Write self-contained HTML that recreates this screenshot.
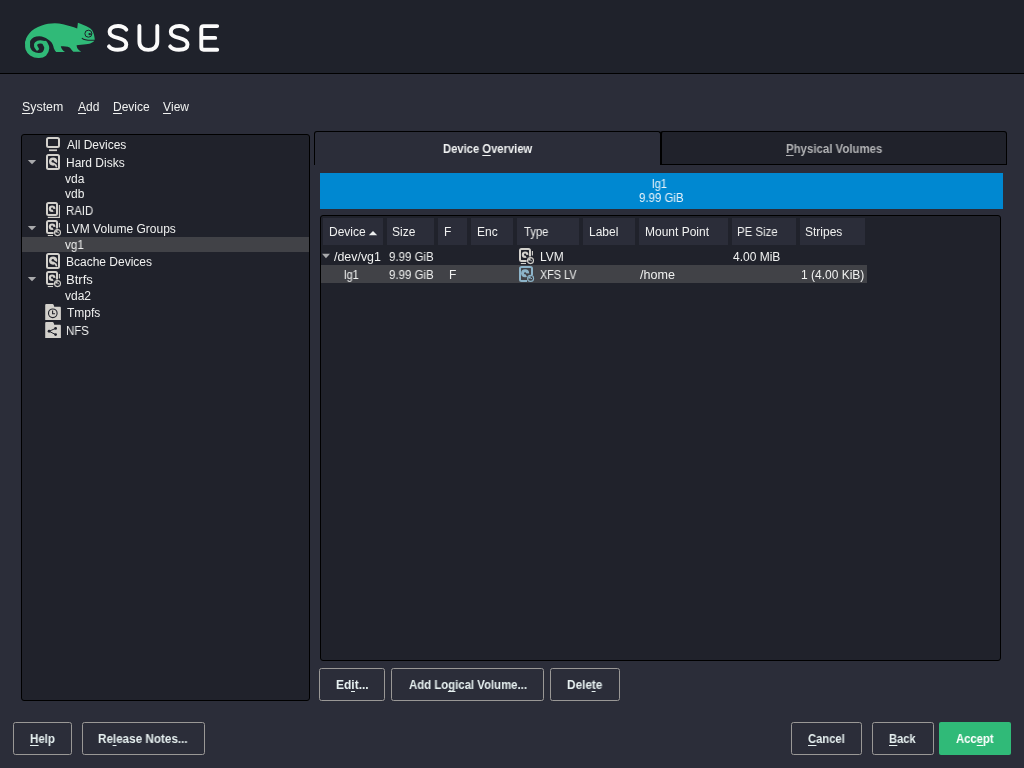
<!DOCTYPE html>
<html><head><meta charset="utf-8"><style>
*{margin:0;padding:0;box-sizing:border-box}
html,body{width:1024px;height:768px;overflow:hidden;background:#2b2d39;font-family:"Liberation Sans",sans-serif;color:#f0f1f0}
.a{position:absolute}
.t{position:absolute;white-space:nowrap;font-size:12px;line-height:20px;will-change:transform;transform-origin:0 0}
.b{font-weight:bold}
u{text-decoration:none;position:relative}
u i{position:absolute;left:0;right:0;top:13px;height:1px;background:currentColor}
</style></head>
<body>
<div class="a" style="left:0px;top:0px;width:1024px;height:73px;background:#1f222b"></div>
<div class="a" style="left:0px;top:73px;width:1024px;height:1px;background:#000"></div>
<svg class="a" style="left:0px;top:0px" width="240" height="73" viewBox="0 0 240 73"><path d="M25.1,44 C25.2,36 31,29 41.8,25.4 C48,23.3 56,22.6 63,24.2 C68,25.3 73,26.8 77.2,28.4 L77.9,22.8 C81,24.2 86,26 89.2,27.7 C92.5,29.6 94.2,33 94.8,39.4 C94.3,41.8 91,43.6 86,44.2 C83,44.6 79,44.5 76.6,45.3 C76.8,48 77.8,50 81.2,51.8 L73.3,51.8 C72,50.5 71,48.5 69.6,47.4 C67.5,46.4 64,46.2 60.8,46.2 C61.2,48.4 62.4,50.4 65,51.9 L56.2,51.9 C54.5,50.5 53.8,48.5 53.4,46.6 C52.6,43.3 50.8,40.9 47.7,39.2 C45.3,37.5 42.6,36.5 39.5,36.3 C35.5,36.2 32,37.6 30.4,40.6 C29.8,42.3 29.8,43.5 30,44 Z" fill="#30ba78"/><path d="M27.60,43.00 C27.65,43.92 27.25,46.78 27.90,48.50 C28.55,50.22 29.73,52.12 31.50,53.30 C33.27,54.48 36.37,55.52 38.50,55.60 C40.63,55.68 42.92,55.07 44.30,53.80 C45.68,52.53 46.68,49.73 46.80,48.00 C46.92,46.27 45.30,44.17 45.00,43.40" fill="none" stroke="#30ba78" stroke-width="5" stroke-linecap="round" stroke-linejoin="round"/><path d="M46.80,48.00 C46.50,47.23 46.10,44.43 45.00,43.40 C43.90,42.37 41.67,41.80 40.20,41.80 C38.73,41.80 36.95,42.68 36.20,43.40 C35.45,44.12 35.52,45.18 35.70,46.10 C35.88,47.02 37.03,48.43 37.30,48.90" fill="none" stroke="#30ba78" stroke-width="3.3" stroke-linecap="round" stroke-linejoin="round"/><circle cx="88.4" cy="33.7" r="3.5" fill="none" stroke="#1f222b" stroke-width="1.0"/><circle cx="89.5" cy="34.1" r="1.1" fill="#1f222b"/><path d="M89.5,34.1 L92,34.1" stroke="#1f222b" stroke-width="1.1"/><path d="M82.2,38.4 C84,40.2 87,40.6 94.8,40.2" fill="none" stroke="#1f222b" stroke-width="1.1" stroke-linecap="round"/><path d="M126.3,29.7 C124.5,27.2 121.5,26 118.1,26 C113,26 109.6,28.3 109.6,31.9 C109.6,35.6 113.5,36.8 117.8,37.8 C122.5,38.9 126.3,40.4 126.3,44.6 C126.3,48.2 122.7,49.8 117.8,49.8 C113.8,49.8 110.8,48.6 109,46.4" fill="none" stroke="#fbfbfb" stroke-width="3.9" stroke-linecap="round" stroke-linejoin="round"/><path d="M126.3,29.7 C124.5,27.2 121.5,26 118.1,26 C113,26 109.6,28.3 109.6,31.9 C109.6,35.6 113.5,36.8 117.8,37.8 C122.5,38.9 126.3,40.4 126.3,44.6 C126.3,48.2 122.7,49.8 117.8,49.8 C113.8,49.8 110.8,48.6 109,46.4" transform="translate(61.2,0)" fill="none" stroke="#fbfbfb" stroke-width="3.9" stroke-linecap="round" stroke-linejoin="round"/><path d="M139.4,26 L139.4,41.8 C139.4,47 142.8,49.9 148.3,49.9 C153.8,49.9 157.3,47 157.3,41.8 L157.3,26" fill="none" stroke="#fbfbfb" stroke-width="3.9" stroke-linecap="round" stroke-linejoin="round"/><path d="M217.2,26.1 L203.6,26.1 C202,26.1 201.3,26.9 201.3,28.5 L201.3,47.3 C201.3,48.9 202,49.7 203.6,49.7 L217.2,49.7 M201.5,37.9 L215.2,37.9" fill="none" stroke="#fbfbfb" stroke-width="3.9" stroke-linecap="round" stroke-linejoin="round"/></svg>
<div class="a" style="left:21px;top:134px;width:289px;height:567px;background:#20222b;border:1px solid #000000;border-radius:3px"></div>
<div class="a" style="left:22px;top:237px;width:287px;height:15px;background:#414247"></div>
<svg class="a" style="left:45px;top:135px" width="17" height="18" viewBox="0 0 17 18"><rect x="2" y="3" width="12" height="9" rx="1.5" fill="none" stroke="#d3d1cc" stroke-width="2"/><rect x="4" y="14.4" width="8" height="1.7" fill="#d3d1cc"/></svg>
<svg class="a" style="left:27px;top:159px" width="10" height="6" viewBox="0 0 10 6"><path d="M0.8,1 L9.2,1 L5,5.2 Z" fill="#a9aaac"/></svg>
<svg class="a" style="left:45px;top:153px" width="17" height="18" viewBox="0 0 17 18"><rect x="2" y="2" width="12" height="14" rx="1.5" fill="none" stroke="#d3d1cc" stroke-width="2"/><circle cx="8.1" cy="8.6" r="4.1" fill="#d3d1cc"/><circle cx="7.8" cy="8.2" r="1.2" fill="#20222b"/><path d="M8,8.4 L12.6,11.4" stroke="#20222b" stroke-width="1.3"/><path d="M10.6,12 L11.4,13.6" stroke="#d3d1cc" stroke-width="1.7" stroke-linecap="round"/></svg>
<svg class="a" style="left:45px;top:201px" width="17" height="18" viewBox="0 0 17 18"><rect x="2" y="2" width="10" height="12" rx="1.5" fill="none" stroke="#d3d1cc" stroke-width="2"/><circle cx="7.1" cy="7.7" r="3.3" fill="#d3d1cc"/><path d="M7.1,7.7 L10.899999999999999,7.9 L9.08,11.6 Z" fill="#20222b"/><circle cx="7.1" cy="7.7" r="1.1" fill="#20222b"/><path d="M14.4,4 L14.4,16.4 L2.8,16.4" fill="none" stroke="#d3d1cc" stroke-width="1.1"/></svg>
<svg class="a" style="left:27px;top:225px" width="10" height="6" viewBox="0 0 10 6"><path d="M0.8,1 L9.2,1 L5,5.2 Z" fill="#a9aaac"/></svg>
<svg class="a" style="left:45px;top:219px" width="17" height="18" viewBox="0 0 17 18"><path d="M12,9.5 L12,3.5 C12,2.6 11.4,2 10.5,2 L3.5,2 C2.6,2 2,2.6 2,3.5 L2,12.5 C2,13.4 2.6,14 3.5,14 L8.6,14" fill="none" stroke="#d3d1cc" stroke-width="2"/><circle cx="7.1" cy="7.7" r="3.3" fill="#d3d1cc"/><path d="M7.1,7.7 L10.899999999999999,7.9 L9.08,11.6 Z" fill="#20222b"/><circle cx="7.1" cy="7.7" r="1.1" fill="#20222b"/><path d="M14.4,3.9 L14.4,8.6" stroke="#d3d1cc" stroke-width="1.1"/><path d="M2.8,16.5 L8,16.5" stroke="#d3d1cc" stroke-width="1.1"/><circle cx="12.5" cy="13.6" r="3.5" fill="#20222b"/><circle cx="12.5" cy="13.6" r="3.0" fill="none" stroke="#d3d1cc" stroke-width="1.1"/><path d="M12.5,13.6 L12.5,11.1 A2.5,2.5 0 0 0 10.0,13.6 Z" fill="#d3d1cc"/><path d="M12.5,13.6 L13.9,13.799999999999999" stroke="#d3d1cc" stroke-width="0.9"/></svg>
<svg class="a" style="left:45px;top:252px" width="17" height="18" viewBox="0 0 17 18"><rect x="2" y="2" width="12" height="14" rx="1.5" fill="none" stroke="#d3d1cc" stroke-width="2"/><circle cx="8.1" cy="8.6" r="4.1" fill="#d3d1cc"/><circle cx="7.8" cy="8.2" r="1.2" fill="#20222b"/><path d="M8,8.4 L12.6,11.4" stroke="#20222b" stroke-width="1.3"/><path d="M10.6,12 L11.4,13.6" stroke="#d3d1cc" stroke-width="1.7" stroke-linecap="round"/></svg>
<svg class="a" style="left:27px;top:276px" width="10" height="6" viewBox="0 0 10 6"><path d="M0.8,1 L9.2,1 L5,5.2 Z" fill="#a9aaac"/></svg>
<svg class="a" style="left:45px;top:270px" width="17" height="18" viewBox="0 0 17 18"><path d="M12,9.5 L12,3.5 C12,2.6 11.4,2 10.5,2 L3.5,2 C2.6,2 2,2.6 2,3.5 L2,12.5 C2,13.4 2.6,14 3.5,14 L8.6,14" fill="none" stroke="#d3d1cc" stroke-width="2"/><circle cx="7.1" cy="7.7" r="3.3" fill="#d3d1cc"/><path d="M7.1,7.7 L10.899999999999999,7.9 L9.08,11.6 Z" fill="#20222b"/><circle cx="7.1" cy="7.7" r="1.1" fill="#20222b"/><path d="M14.4,3.9 L14.4,8.6" stroke="#d3d1cc" stroke-width="1.1"/><path d="M2.8,16.5 L8,16.5" stroke="#d3d1cc" stroke-width="1.1"/><circle cx="12.5" cy="13.6" r="3.5" fill="#20222b"/><circle cx="12.5" cy="13.6" r="3.0" fill="none" stroke="#d3d1cc" stroke-width="1.1"/><path d="M12.5,13.6 L12.5,11.1 A2.5,2.5 0 0 0 10.0,13.6 Z" fill="#d3d1cc"/><path d="M12.5,13.6 L13.9,13.799999999999999" stroke="#d3d1cc" stroke-width="0.9"/></svg>
<svg class="a" style="left:45px;top:303px" width="17" height="18" viewBox="0 0 17 18"><path d="M0.2,2.2 C0.2,1.5 0.7,1 1.4,1 L7.6,1 C8.5,1 8.8,1.8 9.2,3.8 L14.8,3.8 C15.5,3.8 15.9,4.2 15.9,4.9 L15.9,17 L0.2,17 Z" fill="#d3d1cc"/><circle cx="7.8" cy="10.3" r="4.3" fill="none" stroke="#20222b" stroke-width="1.1"/><path d="M7.6,7.6 L7.6,10.7 L10,10.7" fill="none" stroke="#20222b" stroke-width="1.1"/></svg>
<svg class="a" style="left:45px;top:321px" width="17" height="18" viewBox="0 0 17 18"><path d="M0.2,2.2 C0.2,1.5 0.7,1 1.4,1 L7.6,1 C8.5,1 8.8,1.8 9.2,3.8 L14.8,3.8 C15.5,3.8 15.9,4.2 15.9,4.9 L15.9,17 L0.2,17 Z" fill="#d3d1cc"/><path d="M10.6,7.4 L4.1,10.25 L10.6,13.6" fill="none" stroke="#20222b" stroke-width="1"/><circle cx="10.6" cy="7.4" r="1.4" fill="#20222b"/><circle cx="4.1" cy="10.25" r="1.4" fill="#20222b"/><circle cx="10.6" cy="13.6" r="1.4" fill="#20222b"/></svg>
<div class="a" style="left:314px;top:131px;width:347px;height:34px;background:#2b2d39;border:1px solid #000000;border-bottom:none;border-radius:3px 3px 0 0"></div>
<div class="a" style="left:660px;top:131px;width:347px;height:34px;background:#20222b;border:1px solid #000000;border-left-width:2px;border-radius:3px 3px 0 0"></div>
<div class="a" style="left:320px;top:173px;width:683px;height:36px;background:#0088d1"></div>
<div class="a" style="left:320px;top:215px;width:681px;height:446px;background:#20222b;border:1px solid #000000;border-radius:3px"></div>
<div class="a" style="left:323px;top:218px;width:60px;height:27px;background:#2b2d39"></div>
<div class="a" style="left:387px;top:218px;width:47px;height:27px;background:#2b2d39"></div>
<div class="a" style="left:438px;top:218px;width:29px;height:27px;background:#2b2d39"></div>
<div class="a" style="left:471px;top:218px;width:42px;height:27px;background:#2b2d39"></div>
<div class="a" style="left:517px;top:218px;width:62px;height:27px;background:#2b2d39"></div>
<div class="a" style="left:583px;top:218px;width:52px;height:27px;background:#2b2d39"></div>
<div class="a" style="left:639px;top:218px;width:89px;height:27px;background:#2b2d39"></div>
<div class="a" style="left:732px;top:218px;width:64px;height:27px;background:#2b2d39"></div>
<div class="a" style="left:800px;top:218px;width:65px;height:27px;background:#2b2d39"></div>
<svg class="a" style="left:368px;top:230px" width="10" height="6" viewBox="0 0 10 6"><path d="M0.8,5.2 L9.2,5.2 L5,1 Z" fill="#eceeee"/></svg>
<div class="a" style="left:321px;top:265px;width:546px;height:18px;background:#414247"></div>
<svg class="a" style="left:322px;top:253px" width="9" height="6" viewBox="0 0 9 6"><path d="M0,0.8 L8,0.8 L4,5.2 Z" fill="#a9aaac"/></svg>
<svg class="a" style="left:518px;top:247px" width="17" height="18" viewBox="0 0 17 18"><path d="M12,9.5 L12,3.5 C12,2.6 11.4,2 10.5,2 L3.5,2 C2.6,2 2,2.6 2,3.5 L2,12.5 C2,13.4 2.6,14 3.5,14 L8.6,14" fill="none" stroke="#d3d1cc" stroke-width="2"/><circle cx="7.1" cy="7.7" r="3.3" fill="#d3d1cc"/><path d="M7.1,7.7 L10.899999999999999,7.9 L9.08,11.6 Z" fill="#20222b"/><circle cx="7.1" cy="7.7" r="1.1" fill="#20222b"/><path d="M14.4,3.9 L14.4,8.6" stroke="#d3d1cc" stroke-width="1.1"/><path d="M2.8,16.5 L8,16.5" stroke="#d3d1cc" stroke-width="1.1"/><circle cx="12.5" cy="13.6" r="3.5" fill="#20222b"/><circle cx="12.5" cy="13.6" r="3.0" fill="none" stroke="#d3d1cc" stroke-width="1.1"/><path d="M12.5,13.6 L12.5,11.1 A2.5,2.5 0 0 0 10.0,13.6 Z" fill="#d3d1cc"/><path d="M12.5,13.6 L13.9,13.799999999999999" stroke="#d3d1cc" stroke-width="0.9"/></svg>
<svg class="a" style="left:518px;top:265px" width="17" height="18" viewBox="0 0 17 18"><path d="M14,10 L14,3.5 C14,2.6 13.4,2 12.5,2 L3.5,2 C2.6,2 2,2.6 2,3.5 L2,14.5 C2,15.4 2.6,16 3.5,16 L9,16" fill="none" stroke="#8db4c9" stroke-width="2"/><circle cx="7.1" cy="8.3" r="4.0" fill="#8db4c9"/><path d="M7.1,8.3 L11.6,8.5 L9.5,12.9 Z" fill="#414247"/><circle cx="7.1" cy="8.3" r="1.1" fill="#414247"/><circle cx="12.6" cy="13.4" r="3.5" fill="#414247"/><circle cx="12.6" cy="13.4" r="3.0" fill="none" stroke="#8db4c9" stroke-width="1.1"/><path d="M12.6,13.4 L12.6,10.9 A2.5,2.5 0 0 0 10.1,13.4 Z" fill="#8db4c9"/><path d="M12.6,13.4 L14.0,13.6" stroke="#8db4c9" stroke-width="0.9"/></svg>
<div class="a" style="left:319px;top:668px;width:66px;height:33px;border:1.2px solid #9a9896;border-radius:2.5px"></div>
<div class="a" style="left:391px;top:668px;width:153px;height:33px;border:1.2px solid #9a9896;border-radius:2.5px"></div>
<div class="a" style="left:550px;top:668px;width:70px;height:33px;border:1.2px solid #9a9896;border-radius:2.5px"></div>
<div class="a" style="left:13px;top:722px;width:59px;height:33px;border:1.2px solid #9a9896;border-radius:2.5px"></div>
<div class="a" style="left:82px;top:722px;width:123px;height:33px;border:1.2px solid #9a9896;border-radius:2.5px"></div>
<div class="a" style="left:791px;top:722px;width:71px;height:33px;border:1.2px solid #9a9896;border-radius:2.5px"></div>
<div class="a" style="left:872px;top:722px;width:62px;height:33px;border:1.2px solid #9a9896;border-radius:2.5px"></div>
<div class="a" style="left:939px;top:722px;width:72px;height:33px;background:#30ba78;border-radius:2px"></div>
<div class="t" style="left:21.97px;top:97px;color:#f0f1f0;transform:scaleX(1.0316);"><u>S<i></i></u>ystem</div>
<div class="t" style="left:77.50px;top:97px;color:#f0f1f0;"><u>A<i></i></u>dd</div>
<div class="t" style="left:112.50px;top:97px;color:#f0f1f0;"><u>D<i></i></u>evice</div>
<div class="t" style="left:163.00px;top:97px;color:#f0f1f0;"><u>V<i></i></u>iew</div>
<div class="t" style="left:67.00px;top:135px;color:#f0f1f0;">All Devices</div>
<div class="t" style="left:66.00px;top:153px;color:#f0f1f0;">Hard Disks</div>
<div class="t" style="left:65.00px;top:169px;color:#f0f1f0;">vda</div>
<div class="t" style="left:65.00px;top:184px;color:#f0f1f0;">vdb</div>
<div class="t" style="left:66.25px;top:201px;color:#f0f1f0;transform:scaleX(0.9481);">RAID</div>
<div class="t" style="left:66.00px;top:219px;color:#f0f1f0;">LVM Volume Groups</div>
<div class="t" style="left:65.00px;top:235px;color:#f0f1f0;transform:scaleX(0.9684);">vg1</div>
<div class="t" style="left:66.00px;top:252px;color:#f0f1f0;">Bcache Devices</div>
<div class="t" style="left:66.11px;top:270px;color:#f0f1f0;transform:scaleX(1.0870);">Btrfs</div>
<div class="t" style="left:65.00px;top:286px;color:#f0f1f0;">vda2</div>
<div class="t" style="left:67.00px;top:303px;color:#f0f1f0;">Tmpfs</div>
<div class="t" style="left:66.25px;top:321px;color:#f0f1f0;transform:scaleX(0.9478);">NFS</div>
<div class="t b" style="left:442.56px;top:139px;color:#f0f2f2;transform:scaleX(0.9351);">Device <u>O<i></i></u>verview</div>
<div class="t b" style="left:785.55px;top:139px;color:#b1b2b4;transform:scaleX(0.9520);"><u>P<i></i></u>hysical Volumes</div>
<div class="t" style="left:652.16px;top:174px;color:#e8f3fa;transform:scaleX(0.9400);">lg1</div>
<div class="t" style="left:638.80px;top:188px;color:#e8f3fa;transform:scaleX(0.9543);">9.99 GiB</div>
<div class="t" style="left:329.00px;top:222px;color:#f0f1f0;">Device</div>
<div class="t" style="left:392.00px;top:222px;color:#f0f1f0;">Size</div>
<div class="t" style="left:443.50px;top:222px;color:#f0f1f0;">F</div>
<div class="t" style="left:477.00px;top:222px;color:#f0f1f0;">Enc</div>
<div class="t" style="left:523.70px;top:222px;color:#f0f1f0;transform:scaleX(0.9385);">Type</div>
<div class="t" style="left:588.50px;top:222px;color:#f0f1f0;">Label</div>
<div class="t" style="left:644.50px;top:222px;color:#f0f1f0;">Mount Point</div>
<div class="t" style="left:737.35px;top:222px;color:#f0f1f0;transform:scaleX(0.9537);">PE Size</div>
<div class="t" style="left:805.00px;top:222px;color:#f0f1f0;">Stripes</div>
<div class="t" style="left:334.00px;top:247px;color:#f0f1f0;transform:scaleX(1.0333);">/dev/vg1</div>
<div class="t" style="left:388.50px;top:247px;color:#f0f1f0;transform:scaleX(0.9565);">9.99 GiB</div>
<div class="t" style="left:539.50px;top:247px;color:#f0f1f0;">LVM</div>
<div class="t" style="left:733.00px;top:247px;color:#f0f1f0;">4.00 MiB</div>
<div class="t" style="left:343.67px;top:265px;color:#f0f1f0;transform:scaleX(0.9267);">lg1</div>
<div class="t" style="left:388.50px;top:265px;color:#f0f1f0;transform:scaleX(0.9565);">9.99 GiB</div>
<div class="t" style="left:448.50px;top:265px;color:#f0f1f0;">F</div>
<div class="t" style="left:540.30px;top:265px;color:#f0f1f0;transform:scaleX(0.9025);">XFS LV</div>
<div class="t" style="left:640.30px;top:265px;color:#f0f1f0;transform:scaleX(1.0455);">/home</div>
<div class="t" style="left:801.00px;top:265px;color:#f0f1f0;">1 (4.00 KiB)</div>
<div class="t b" style="left:335.61px;top:675px;color:#e6f0f0;transform:scaleX(0.9871);">Ed<u>i<i></i></u>t...</div>
<div class="t b" style="left:408.75px;top:675px;color:#e6f0f0;transform:scaleX(0.9476);">Add Lo<u>g<i></i></u>ical Volume...</div>
<div class="t b" style="left:566.82px;top:675px;color:#e6f0f0;transform:scaleX(0.9829);">Dele<u>t<i></i></u>e</div>
<div class="t b" style="left:29.64px;top:729px;color:#e6f0f0;transform:scaleX(0.9560);"><u>H<i></i></u>elp</div>
<div class="t b" style="left:98.43px;top:729px;color:#e6f0f0;transform:scaleX(0.9722);">Re<u>l<i></i></u>ease Notes...</div>
<div class="t b" style="left:808.00px;top:729px;color:#e6f0f0;transform:scaleX(0.9333);"><u>C<i></i></u>ancel</div>
<div class="t b" style="left:888.97px;top:729px;color:#e6f0f0;transform:scaleX(0.9286);"><u>B<i></i></u>ack</div>
<div class="t b" style="left:956.20px;top:729px;color:#ffffff;transform:scaleX(0.9375);">Acc<u>e<i></i></u>pt</div>
</body></html>
